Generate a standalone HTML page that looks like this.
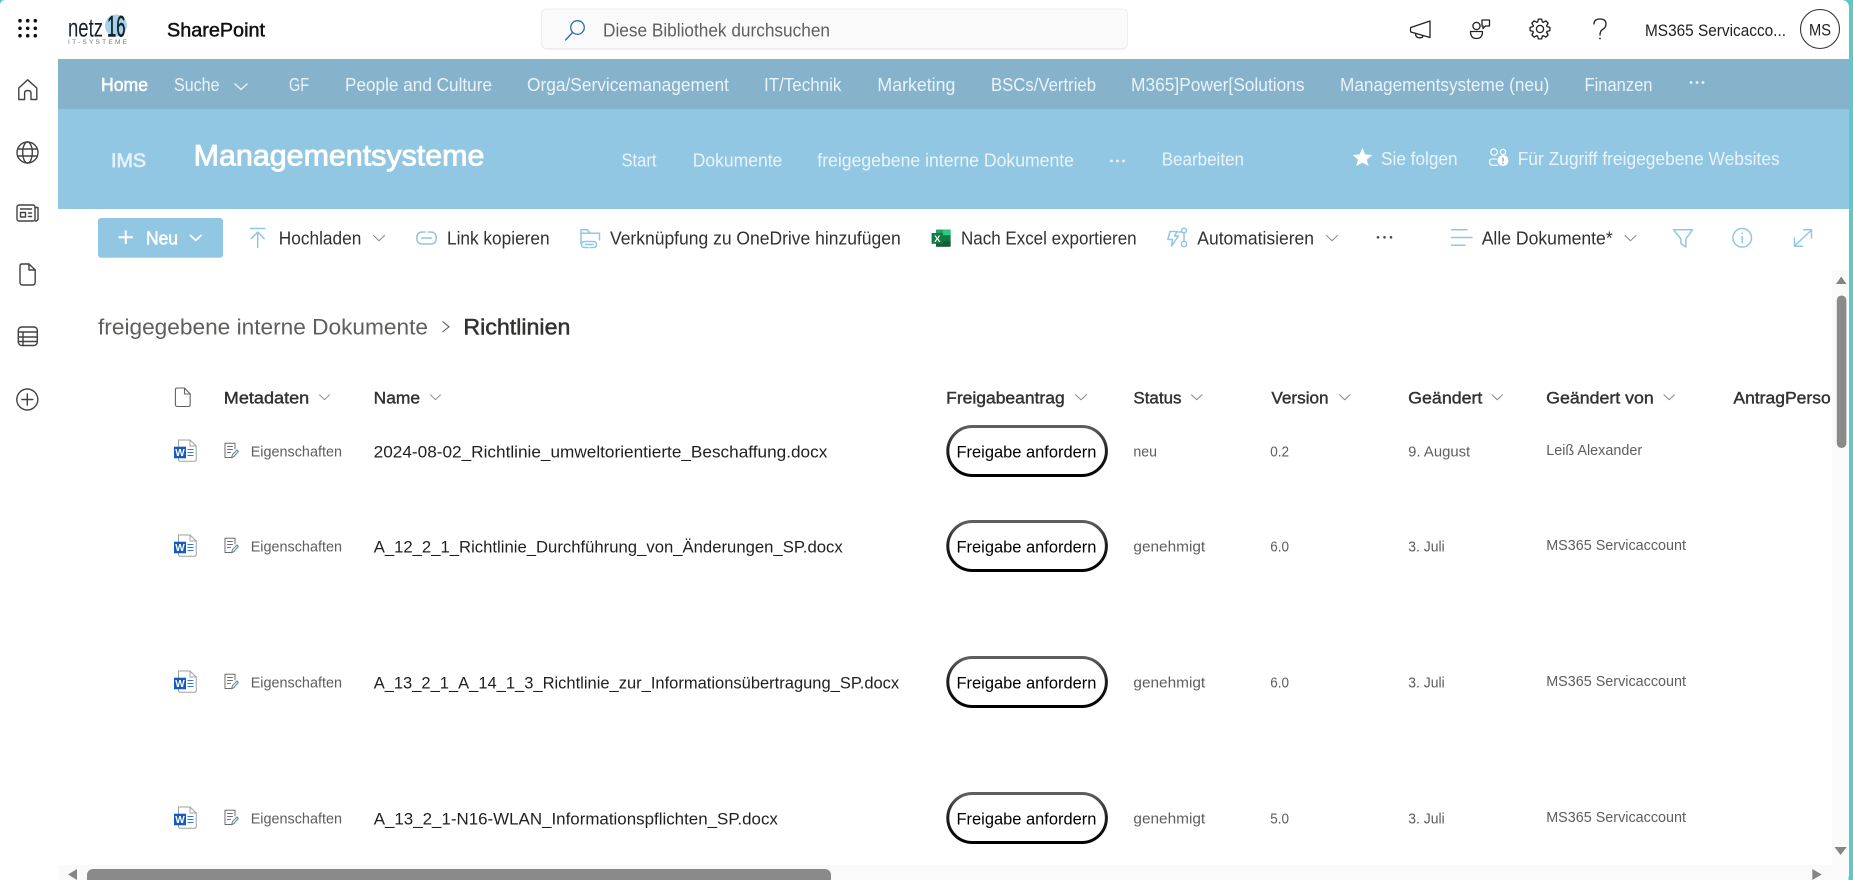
<!DOCTYPE html>
<html lang="de">
<head>
<meta charset="utf-8">
<title>Richtlinien - SharePoint</title>
<style>
html,body{margin:0;padding:0;background:#fff;overflow:hidden;width:1853px;height:880px}
svg{display:block}
text{font-family:"Liberation Sans",sans-serif;white-space:pre}
.nav{font-size:18px;fill:#e9f4fa}
.nb{font-size:18px;fill:#fff;stroke:#fff;stroke-width:.5}
.hd{font-size:18px;fill:#e9f4fa}
.cmd{font-size:18px;fill:#323130}
.th{font-size:17px;fill:#323130;stroke:#323130;stroke-width:.4}
.ei{font-size:14.5px;fill:#605e5c}
.nm{font-size:17px;fill:#201f1e}
.sm{font-size:14.5px;fill:#605e5c}
.bt{font-size:17px;fill:#000}
.ic{fill:none;stroke:#424242;stroke-width:1.4;stroke-linecap:round;stroke-linejoin:round}
.bl{fill:none;stroke:#92c7e3;stroke-width:1.5;stroke-linecap:round;stroke-linejoin:round}
.tk{fill:none;stroke:#222;stroke-width:1.3;stroke-linecap:round;stroke-linejoin:round}
.ch{fill:none;stroke:#8a8886;stroke-width:1;stroke-linecap:round;stroke-linejoin:round}
</style>
</head>
<body>
<svg width="1853" height="880" viewBox="0 0 1853 880" xmlns="http://www.w3.org/2000/svg">
<defs>
<linearGradient id="bg" x1="0" y1="0" x2="0" y2="1"><stop offset="0" stop-color="#5e5e5e"/><stop offset=".45" stop-color="#222"/><stop offset="1" stop-color="#000"/></linearGradient>
<path id="gt" d="M7 -2.4 L9.9 -1.6 L9.9 1.6 L7 2.4 L6.7 3.4" class="tk"/>
<g id="word">
<path d="M178.5 440 H190 L196.2 446 V459.8 Q196.2 461.2 194.8 461.2 H180 Q178.5 461.2 178.5 459.8 Z" fill="#fff" stroke="#a0a0a0" stroke-width="1"/>
<path d="M190 440 V446 H196.2" fill="none" stroke="#a0a0a0" stroke-width="1"/>
<rect x="174" y="446.7" width="12" height="11.6" fill="#185abd"/>
<text x="180" y="456" text-anchor="middle" style="font-size:10px;fill:#fff;font-weight:700">W</text>
<path d="M187.5 449.5H193.5M187.5 452.5H193.5M187.5 455.5H193.5" stroke="#2b7cd3" stroke-width="1.1"/>
</g>
<g id="prop" fill="none" stroke="#6b6b6b" stroke-width="1" stroke-linecap="round" stroke-linejoin="round">
<path d="M232 457.5 H225 V443.2 H235 V449"/>
<path d="M227.5 446.5H232.5M227.5 449.5H232.5M227.5 452.5H230.5"/>
<path d="M231.5 457.8 L232.5 454.5 L237 450 L238.3 451.5 L234 456.5 Z" stroke="#5f7f96"/>
</g>
</defs>

<!-- window frame -->
<rect width="1853" height="880" fill="#5cc9c9"/>
<path d="M6 0 H1841 Q1849 0 1849 8 V874 Q1849 880 1845 880 H0 V6 Q0 0 6 0 Z" fill="#fff"/>

<!-- top bar -->
<g fill="#111">
<circle cx="20" cy="20.7" r="1.8"/><circle cx="27.7" cy="20.7" r="1.8"/><circle cx="35.3" cy="20.7" r="1.8"/>
<circle cx="20" cy="28.3" r="1.8"/><circle cx="27.7" cy="28.3" r="1.8"/><circle cx="35.3" cy="28.3" r="1.8"/>
<circle cx="20" cy="35.7" r="1.8"/><circle cx="27.7" cy="35.7" r="1.8"/><circle cx="35.3" cy="35.7" r="1.8"/>
</g>
<circle cx="116" cy="25.5" r="11" fill="#a5d2e8"/>
<text x="68" y="36.7" textLength="35" lengthAdjust="spacingAndGlyphs" style="font-size:26px;fill:#15202b">netz</text>
<text x="107" y="36.7" textLength="18.5" lengthAdjust="spacingAndGlyphs" style="font-size:30px;fill:#15202b;stroke:#15202b;stroke-width:.5">16</text>
<text x="68" y="44" textLength="59" lengthAdjust="spacing" style="font-size:6.5px;fill:#777">IT-SYSTEME</text>
<text x="167" y="36.7" textLength="98" lengthAdjust="spacingAndGlyphs" style="font-size:19px;fill:#111;stroke:#111;stroke-width:.45">SharePoint</text>

<rect x="541.5" y="10" width="586" height="39.5" rx="5" fill="#e1e1e1"/>
<rect x="541.5" y="9" width="586" height="39.5" rx="5" fill="#fafafa" stroke="#eeeeee"/>
<circle cx="577.5" cy="27.5" r="6.8" fill="none" stroke="#2b6cb8" stroke-width="1.3"/>
<path d="M572.5 32.5 L565.5 40" fill="none" stroke="#2b6cb8" stroke-width="1.3" stroke-linecap="round"/>
<text x="603" y="36.7" textLength="227" lengthAdjust="spacingAndGlyphs" style="font-size:18px;fill:#605e5c">Diese Bibliothek durchsuchen</text>

<path class="tk" d="M1410.8 27.5 L1430 21 V37.5 L1410.8 32 Q1410 29.8 1410.8 27.5 Z"/>
<path class="tk" d="M1415.5 33.5 Q1415.5 37.8 1419.5 37.8 Q1423 37.8 1423 35.5"/>
<circle class="tk" cx="1476.5" cy="26" r="3.6"/>
<path class="tk" d="M1470.5 31.5 H1482.5 Q1482.5 38.5 1476.5 38.5 Q1470.5 38.5 1470.5 31.5 Z"/>
<path class="tk" d="M1482 20 H1489.5 V26 H1485.5 L1483 28.5 V26 H1482 Z"/>
<g transform="translate(1540 29)">
<circle class="tk" r="3.6"/>
<use href="#gt"/><use href="#gt" transform="rotate(45)"/><use href="#gt" transform="rotate(90)"/><use href="#gt" transform="rotate(135)"/><use href="#gt" transform="rotate(180)"/><use href="#gt" transform="rotate(225)"/><use href="#gt" transform="rotate(270)"/><use href="#gt" transform="rotate(315)"/>
</g>
<path class="tk" d="M1594 24 Q1594 19 1600 19 Q1606 19 1606 24 Q1606 27.5 1602.5 29.5 Q1600 31 1600 35"/>
<circle cx="1600" cy="38.5" r=".9" fill="#222"/>
<text x="1645" y="36" textLength="141" lengthAdjust="spacingAndGlyphs" style="font-size:16.5px;fill:#201f1e">MS365 Servicacco...</text>
<circle cx="1820" cy="29" r="19.5" fill="#fff" stroke="#333" stroke-width="1.1"/>
<text x="1809" y="35.5" textLength="22" lengthAdjust="spacingAndGlyphs" style="font-size:16.5px;fill:#201f1e">MS</text>

<!-- left rail -->
<path class="ic" d="M18.8 99.5 V88 L27.7 79.8 L36.8 88 V99.5 H31 V93 Q31 90.5 27.8 90.5 Q24.6 90.5 24.6 93 V99.5 Z"/>
<circle class="ic" cx="27.5" cy="152.5" r="10.5"/>
<ellipse class="ic" cx="27.5" cy="152.5" rx="4.8" ry="10.5"/>
<path class="ic" d="M18 149H37M18 156H37"/>
<rect class="ic" x="17" y="205" width="18" height="16" rx="2"/>
<path class="ic" d="M35 207.5 H38 V218.5 Q38 221 35.5 221"/>
<rect class="ic" x="20.5" y="212.5" width="5" height="4.5"/>
<path class="ic" d="M20.5 209H31.5M28.5 213H31.5M28.5 216.5H31.5"/>
<path class="ic" d="M22 264 H29 L35.2 270 V282 Q35.2 285 32.5 285 H22.8 Q20 285 20 282 V266 Q20 264 22 264 Z"/>
<path class="ic" d="M29 264 V270 H35.2"/>
<rect class="ic" x="18.3" y="327" width="19" height="18.5" rx="3.5"/>
<path class="ic" d="M18.3 332H37.3M18.3 337H37.3M18.3 341.5H37.3M23 332V345.5"/>
<circle class="ic" cx="27.3" cy="399.5" r="10.5"/>
<path class="ic" d="M27.3 394V405M21.8 399.5H32.8"/>

<!-- site nav -->
<rect x="58" y="59" width="1791" height="50" fill="#87b2cb"/>
<text class="nb" x="101" y="91" textLength="47" lengthAdjust="spacingAndGlyphs">Home</text>
<text class="nav" x="174" y="91" textLength="45.5" lengthAdjust="spacingAndGlyphs">Suche</text>
<path d="M234.5 83.5 L241 89.5 L247.5 83.5" fill="none" stroke="#e9f4fa" stroke-width="1.3"/>
<text class="nav" x="289" y="91" textLength="20" lengthAdjust="spacingAndGlyphs">GF</text>
<text class="nav" x="345" y="91" textLength="147" lengthAdjust="spacingAndGlyphs">People and Culture</text>
<text class="nav" x="527" y="91" textLength="202" lengthAdjust="spacingAndGlyphs">Orga/Servicemanagement</text>
<text class="nav" x="764" y="91" textLength="77.4" lengthAdjust="spacingAndGlyphs">IT/Technik</text>
<text class="nav" x="877.4" y="91" textLength="78" lengthAdjust="spacingAndGlyphs">Marketing</text>
<text class="nav" x="991" y="91" textLength="105" lengthAdjust="spacingAndGlyphs">BSCs/Vertrieb</text>
<text class="nav" x="1131" y="91" textLength="173.6" lengthAdjust="spacingAndGlyphs">M365]Power[Solutions</text>
<text class="nav" x="1340" y="91" textLength="209.3" lengthAdjust="spacingAndGlyphs">Managementsysteme (neu)</text>
<text class="nav" x="1584.5" y="91" textLength="68" lengthAdjust="spacingAndGlyphs">Finanzen</text>
<g fill="#e9f4fa"><circle cx="1691" cy="82.5" r="1.4"/><circle cx="1697" cy="82.5" r="1.4"/><circle cx="1703" cy="82.5" r="1.4"/></g>

<!-- site header -->
<rect x="58" y="109" width="1791" height="100" fill="#92c7e3"/>
<text x="111" y="166.8" textLength="35" lengthAdjust="spacingAndGlyphs" style="font-size:19px;fill:#e3f1f9;stroke:#e3f1f9;stroke-width:.7">IMS</text>
<text x="193.7" y="165.7" textLength="290.7" lengthAdjust="spacingAndGlyphs" style="font-size:29.5px;fill:#fff;stroke:#fff;stroke-width:.85">Managementsysteme</text>
<text class="hd" x="621.5" y="166.5" textLength="35" lengthAdjust="spacingAndGlyphs">Start</text>
<text class="hd" x="692.8" y="166.5" textLength="89.5" lengthAdjust="spacingAndGlyphs">Dokumente</text>
<text class="hd" x="817.3" y="166.5" textLength="256.7" lengthAdjust="spacingAndGlyphs">freigegebene interne Dokumente</text>
<g fill="#e9f4fa"><circle cx="1111.5" cy="161" r="1.4"/><circle cx="1117.5" cy="161" r="1.4"/><circle cx="1123.5" cy="161" r="1.4"/></g>
<text class="hd" x="1161.7" y="165.7" textLength="82.3" lengthAdjust="spacingAndGlyphs">Bearbeiten</text>
<polygon fill="#fff" points="1362.4,148 1365.2,154.4 1372.2,155 1366.8,159.6 1368.6,166 1362.4,162.6 1356.2,166 1358,159.6 1352.6,155 1359.6,154.4"/>
<text class="hd" x="1381" y="165" textLength="76.6" lengthAdjust="spacingAndGlyphs">Sie folgen</text>
<g fill="none" stroke="#f2f9fd" stroke-width="1.3">
<circle cx="1494" cy="152" r="3.3"/><circle cx="1503" cy="152" r="2.6"/>
<path d="M1497 159 H1492 Q1489.5 159 1489.5 162 Q1489.5 165.3 1493 165.3 H1498"/>
</g>
<circle cx="1503" cy="160.5" r="5.4" fill="#fff"/>
<path d="M1503 157.5V161.5" stroke="#6fa9c9" stroke-width="1.3"/><circle cx="1503" cy="163.4" r=".8" fill="#6fa9c9"/>
<text class="hd" x="1517.7" y="165" textLength="262" lengthAdjust="spacingAndGlyphs">Für Zugriff freigegebene Websites</text>

<!-- command bar -->
<rect x="98" y="218" width="125" height="39.7" rx="3" fill="#92c7e3"/>
<path d="M125.8 230.5V244M118.5 237.2H133" stroke="#fff" stroke-width="2" fill="none"/>
<text x="146" y="244.6" textLength="32" lengthAdjust="spacingAndGlyphs" style="font-size:18px;fill:#fff;stroke:#fff;stroke-width:.55">Neu</text>
<path d="M190 235 L195.8 240.3 L201.6 235" fill="none" stroke="#fff" stroke-width="1.7"/>

<path class="bl" d="M250.5 228.5H265M257.7 247.5V232M251.3 238.7L257.7 232L264.2 238.7"/>
<text class="cmd" x="278.8" y="244.4" textLength="82.5" lengthAdjust="spacingAndGlyphs">Hochladen</text>
<path class="ch" d="M373.5 235.5L379 240.7L384.5 235.5"/>

<path class="bl" d="M425 232H422.5Q416.8 232 416.8 238Q416.8 244 422.5 244H430.5Q436.3 244 436.3 238Q436.3 232 430.5 232H428M421.5 238H431.5"/>
<text class="cmd" x="447" y="244.4" textLength="102.6" lengthAdjust="spacingAndGlyphs">Link kopieren</text>

<path class="bl" d="M581 244V229.8H587.5L590 233.3H599.5V240M581 233.3H590M588 247.5H585Q581.5 247.5 581.5 244.5Q581.5 241.5 585 241.5H593Q596.5 241.5 596.5 244.5Q596.5 247.5 593 247.5H590M585.5 244.5H593"/>
<text class="cmd" x="610" y="244.4" textLength="290.7" lengthAdjust="spacingAndGlyphs">Verknüpfung zu OneDrive hinzufügen</text>

<rect x="936" y="229.5" width="14.6" height="17.2" rx="1" fill="#21a366"/>
<rect x="943" y="229.5" width="7.6" height="5.8" fill="#33c481"/>
<rect x="936" y="241" width="14.6" height="5.7" fill="#185c37"/>
<rect x="943" y="235.3" width="7.6" height="5.7" fill="#107c41"/>
<rect x="931.6" y="233" width="11.4" height="10.8" fill="#107c41"/>
<text x="937.3" y="242" text-anchor="middle" style="font-size:9.5px;fill:#fff;font-weight:700">X</text>
<text class="cmd" x="961" y="244.4" textLength="175.6" lengthAdjust="spacingAndGlyphs">Nach Excel exportieren</text>

<path class="bl" d="M1170 231.5H1177L1174.5 236H1178.5L1171.5 246L1172.5 239.5H1167.8ZM1178 232H1181.5"/>
<circle class="bl" cx="1184" cy="230.5" r="2.4"/><circle class="bl" cx="1184" cy="244" r="2.6"/>
<path class="bl" d="M1184 233V241.4"/>
<text class="cmd" x="1197.3" y="244.4" textLength="116.7" lengthAdjust="spacingAndGlyphs">Automatisieren</text>
<path class="ch" d="M1326.5 235.5L1332 240.7L1337.5 235.5"/>
<g fill="#444"><circle cx="1378" cy="237.3" r="1.3"/><circle cx="1384.5" cy="237.3" r="1.3"/><circle cx="1391" cy="237.3" r="1.3"/></g>

<path class="bl" d="M1451.5 229.8H1467M1451.5 237.5H1472M1451.5 245.2H1465"/>
<text class="cmd" x="1481.7" y="244.4" textLength="131" lengthAdjust="spacingAndGlyphs">Alle Dokumente*</text>
<path class="ch" d="M1625 235.5L1630.5 240.7L1636 235.5"/>
<path class="bl" d="M1673.5 229.8H1692.5L1685.8 239V247L1681 243.5V239Z"/>
<circle class="bl" cx="1742.2" cy="237.8" r="9.3"/>
<path class="bl" d="M1742.2 236.5V242.8"/><circle cx="1742.2" cy="233.2" r=".9" fill="#92c7e3"/>
<path class="bl" d="M1794.5 246L1811.5 230M1803.5 229.8H1811.5V238M1794.5 238V246.3H1802.5"/>

<!-- breadcrumb -->
<text x="98" y="334.3" textLength="330" lengthAdjust="spacingAndGlyphs" style="font-size:22.5px;fill:#605e5c">freigegebene interne Dokumente</text>
<path d="M442.5 321.5L449 326.8L442.5 332" fill="none" stroke="#605e5c" stroke-width="1.1"/>
<text x="463.4" y="334.3" textLength="107" lengthAdjust="spacingAndGlyphs" style="font-size:22.5px;fill:#323130;stroke:#323130;stroke-width:.5">Richtlinien</text>

<!-- table header -->
<path fill="none" stroke="#616161" stroke-width="1.1" stroke-linejoin="round" d="M177 388 H184.5 L190.2 394 V404.5 Q190.2 406.5 188 406.5 H177.5 Q175.4 406.5 175.4 404.5 V390 Q175.4 388 177 388 Z M184.5 388 V394 H190.2"/>
<text class="th" x="223.8" y="403.4" textLength="85.4" lengthAdjust="spacingAndGlyphs">Metadaten</text>
<path class="ch" d="M319.5 394.8L324.5 399.7L329.5 394.8"/>
<text class="th" x="373.7" y="403.4" textLength="46.3" lengthAdjust="spacingAndGlyphs">Name</text>
<path class="ch" d="M430.5 394.8L435.5 399.7L440.5 394.8"/>
<text class="th" x="946.2" y="403.4" textLength="118.5" lengthAdjust="spacingAndGlyphs">Freigabeantrag</text>
<path class="ch" d="M1075.5 394.8L1081 399.7L1086.5 394.8"/>
<text class="th" x="1133.4" y="403.4" textLength="48.1" lengthAdjust="spacingAndGlyphs">Status</text>
<path class="ch" d="M1191.5 394.8L1196.7 399.7L1202 394.8"/>
<text class="th" x="1271.4" y="403.4" textLength="57.2" lengthAdjust="spacingAndGlyphs">Version</text>
<path class="ch" d="M1339.5 394.8L1344.7 399.7L1350 394.8"/>
<text class="th" x="1408.2" y="403.4" textLength="74.2" lengthAdjust="spacingAndGlyphs">Geändert</text>
<path class="ch" d="M1492 394.8L1497.2 399.7L1502.5 394.8"/>
<text class="th" x="1546.2" y="403.4" textLength="107.6" lengthAdjust="spacingAndGlyphs">Geändert von</text>
<path class="ch" d="M1664 394.8L1669.2 399.7L1674.5 394.8"/>
<text class="th" x="1733.4" y="403.4" textLength="97.3" lengthAdjust="spacingAndGlyphs">AntragPerso</text>

<!-- row 1 -->
<use href="#word"/><use href="#prop"/>
<text class="ei" x="250.7" y="456.6" textLength="91.3" lengthAdjust="spacingAndGlyphs">Eigenschaften</text>
<text class="nm" x="373.7" y="457.5" textLength="453.6" lengthAdjust="spacingAndGlyphs">2024-08-02_Richtlinie_umweltorientierte_Beschaffung.docx</text>
<rect x="947.8" y="426.5" width="158.6" height="49" rx="24.5" fill="#fff" stroke="url(#bg)" stroke-width="3"/>
<text class="bt" x="956.5" y="457.3" textLength="139.9" lengthAdjust="spacingAndGlyphs">Freigabe anfordern</text>
<text class="sm" x="1133.4" y="456.6" textLength="23.6" lengthAdjust="spacingAndGlyphs">neu</text>
<text class="sm" x="1270.2" y="456.6" textLength="18.8" lengthAdjust="spacingAndGlyphs">0.2</text>
<text class="sm" x="1408.2" y="456.6" textLength="62" lengthAdjust="spacingAndGlyphs">9. August</text>
<text class="sm" x="1546.2" y="455" textLength="96" lengthAdjust="spacingAndGlyphs">Leiß Alexander</text>

<!-- row 2 -->
<g transform="translate(0 95)">
<use href="#word"/><use href="#prop"/>
<text class="ei" x="250.7" y="456.6" textLength="91.3" lengthAdjust="spacingAndGlyphs">Eigenschaften</text>
<text class="nm" x="373.7" y="457.5" textLength="469" lengthAdjust="spacingAndGlyphs">A_12_2_1_Richtlinie_Durchführung_von_Änderungen_SP.docx</text>
<rect x="947.8" y="426.5" width="158.6" height="49" rx="24.5" fill="#fff" stroke="url(#bg)" stroke-width="3"/>
<text class="bt" x="956.5" y="457.3" textLength="139.9" lengthAdjust="spacingAndGlyphs">Freigabe anfordern</text>
<text class="sm" x="1133.4" y="456.6" textLength="71.8" lengthAdjust="spacingAndGlyphs">genehmigt</text>
<text class="sm" x="1270.2" y="456.6" textLength="18.8" lengthAdjust="spacingAndGlyphs">6.0</text>
<text class="sm" x="1408.2" y="456.6" textLength="36.5" lengthAdjust="spacingAndGlyphs">3. Juli</text>
<text class="sm" x="1546.2" y="455" textLength="139.8" lengthAdjust="spacingAndGlyphs">MS365 Servicaccount</text>
</g>

<!-- row 3 -->
<g transform="translate(0 231)">
<use href="#word"/><use href="#prop"/>
<text class="ei" x="250.7" y="456.6" textLength="91.3" lengthAdjust="spacingAndGlyphs">Eigenschaften</text>
<text class="nm" x="373.7" y="457.5" textLength="525.5" lengthAdjust="spacingAndGlyphs">A_13_2_1_A_14_1_3_Richtlinie_zur_Informationsübertragung_SP.docx</text>
<rect x="947.8" y="426.5" width="158.6" height="49" rx="24.5" fill="#fff" stroke="url(#bg)" stroke-width="3"/>
<text class="bt" x="956.5" y="457.3" textLength="139.9" lengthAdjust="spacingAndGlyphs">Freigabe anfordern</text>
<text class="sm" x="1133.4" y="456.6" textLength="71.8" lengthAdjust="spacingAndGlyphs">genehmigt</text>
<text class="sm" x="1270.2" y="456.6" textLength="18.8" lengthAdjust="spacingAndGlyphs">6.0</text>
<text class="sm" x="1408.2" y="456.6" textLength="36.5" lengthAdjust="spacingAndGlyphs">3. Juli</text>
<text class="sm" x="1546.2" y="455" textLength="139.8" lengthAdjust="spacingAndGlyphs">MS365 Servicaccount</text>
</g>

<!-- row 4 -->
<g transform="translate(0 367)">
<use href="#word"/><use href="#prop"/>
<text class="ei" x="250.7" y="456.6" textLength="91.3" lengthAdjust="spacingAndGlyphs">Eigenschaften</text>
<text class="nm" x="373.7" y="457.5" textLength="404.2" lengthAdjust="spacingAndGlyphs">A_13_2_1-N16-WLAN_Informationspflichten_SP.docx</text>
<rect x="947.8" y="426.5" width="158.6" height="49" rx="24.5" fill="#fff" stroke="url(#bg)" stroke-width="3"/>
<text class="bt" x="956.5" y="457.3" textLength="139.9" lengthAdjust="spacingAndGlyphs">Freigabe anfordern</text>
<text class="sm" x="1133.4" y="456.6" textLength="71.8" lengthAdjust="spacingAndGlyphs">genehmigt</text>
<text class="sm" x="1270.2" y="456.6" textLength="18.8" lengthAdjust="spacingAndGlyphs">5.0</text>
<text class="sm" x="1408.2" y="456.6" textLength="36.5" lengthAdjust="spacingAndGlyphs">3. Juli</text>
<text class="sm" x="1546.2" y="455" textLength="139.8" lengthAdjust="spacingAndGlyphs">MS365 Servicaccount</text>
</g>

<!-- scrollbars -->
<rect x="1831.7" y="270" width="17" height="595" fill="#fafafa"/>
<rect x="58.5" y="865" width="1790" height="15" fill="#fafafa"/>
<polygon points="1841.3,276.5 1846.5,284 1836,284" fill="#858585"/>
<rect x="1836.8" y="295.5" width="9.6" height="152.5" rx="4.8" fill="#8a8a8a"/>
<polygon points="1834.5,847 1846.7,847 1840.6,855" fill="#858585"/>
<polygon points="68,874.5 77,869 77,880" fill="#858585"/>
<rect x="87" y="869" width="744" height="16" rx="6" fill="#8a8a8a"/>
<polygon points="1821.7,874.5 1812.3,869 1812.3,880" fill="#858585"/>
</svg>
</body>
</html>
